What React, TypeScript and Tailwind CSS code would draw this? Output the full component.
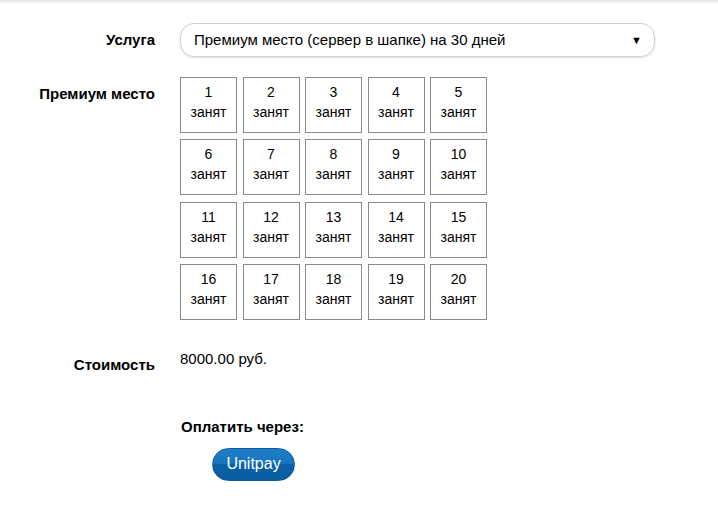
import React from "react";

// ─── Data ─────────────────────────────────────────────────────────────────────

const PLACES = Array.from({ length: 20 }, (_, i) => i + 1);

// ─── Pieces ───────────────────────────────────────────────────────────────────

const Label: React.FC<{ children: React.ReactNode; className?: string }> = ({ children, className = "" }) => (
  <div className={`w-[155px] shrink-0 text-right text-[15px] font-bold text-black ${className}`}>
    {children}
  </div>
);

const PlaceCell: React.FC<{ n: number }> = ({ n }) => (
  <div className="w-[57px] h-[56px] border border-[#8a8a8a] flex flex-col items-center pt-[4px] text-[14px] leading-[20px] text-black">
    <span>{n}</span>
    <span>занят</span>
  </div>
);

// ─── Main ─────────────────────────────────────────────────────────────────────

export default function App() {
  return (
    <div
      className="w-[718px] h-[508px] bg-white overflow-hidden"
      style={{ fontFamily: '"Liberation Sans", Arial, sans-serif' }}
    >
      {/* top strip */}
      <div className="h-[4px] bg-gradient-to-b from-[#e2e2e2] to-white" />

      {/* Услуга */}
      <div className="flex items-center gap-[25px] mt-[19px]">
        <Label>Услуга</Label>
        <div className="relative w-[475px] h-[34px] rounded-[14px] border border-[#cfcfcf] shadow-[0_1px_2px_rgba(0,0,0,0.12)] flex items-center pl-[13px] text-[15px] text-black">
          Премиум место (сервер в шапке) на 30 дней
          <span className="absolute right-[12px] top-[8px] text-[11px]">▼</span>
        </div>
      </div>

      {/* Премиум место */}
      <div className="flex gap-[25px] mt-[20px]">
        <Label className="pt-[6px]">Премиум место</Label>
        <div className="grid grid-cols-[repeat(5,57px)] gap-x-[5.5px] gap-y-[6.3px]">
          {PLACES.map((n) => (
            <PlaceCell key={n} n={n} />
          ))}
        </div>
      </div>

      {/* Стоимость */}
      <div className="flex gap-[25px] mt-[28px]">
        <Label className="pt-[6px]">Стоимость</Label>
        <div className="text-[15px] text-black">8000.00 руб.</div>
      </div>

      {/* Оплатить */}
      <div className="pl-[181px] mt-[40px]">
        <div className="text-[15px] font-bold text-black">Оплатить через:</div>
        <button className="mt-[9px] ml-[31px] w-[83px] h-[33px] rounded-full border border-[#0a5a9e] bg-[linear-gradient(to_bottom,#1f7fc8_0%,#1772bd_50%,#0b61a7_50%,#0a5ca0_100%)] text-white text-[16px] flex items-center justify-center">
          Unitpay
        </button>
      </div>
    </div>
  );
}
